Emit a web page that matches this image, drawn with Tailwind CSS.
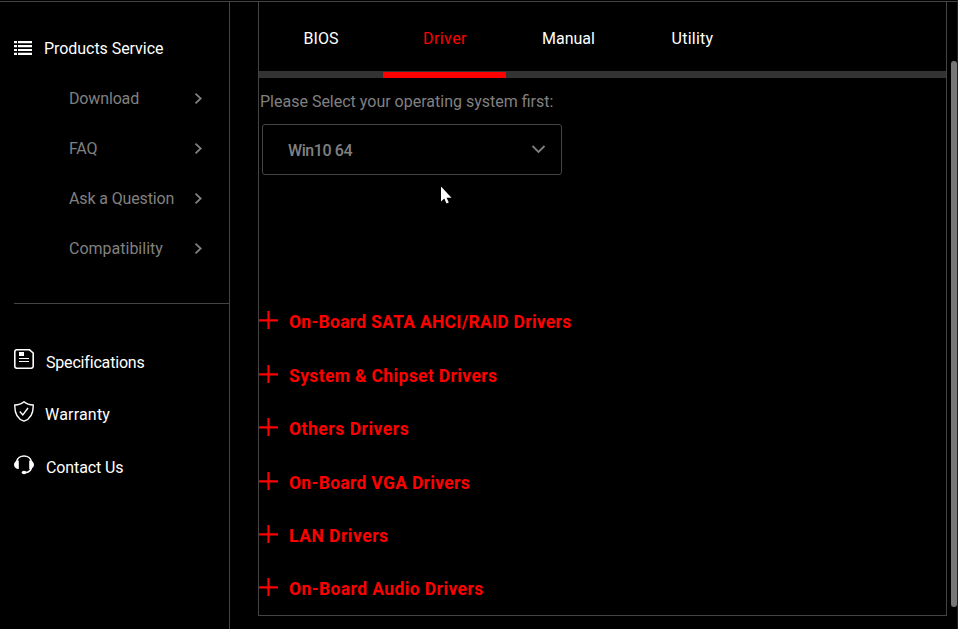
<!DOCTYPE html>
<html lang="en">
<head>
<meta charset="utf-8">
<title>Driver downloads</title>
<script src="https://cdn.jsdelivr.net/npm/@tailwindcss/browser@4"></script>
</head>
<body class="bg-black">
<div class="relative flex h-[629px] w-[958px] overflow-hidden border-r border-[#222] bg-black font-[Roboto,sans-serif] text-[16px] leading-[20px] whitespace-nowrap text-white">
  <aside class="mt-px w-[230px] shrink-0 border-t border-r border-[#444]">
    <nav class="pt-[37px] pl-[14px]">
      <a class="flex h-[20px] items-center gap-[12px]">
        <svg class="-mt-[2px] h-[14px] w-[18px]" viewBox="0 0 18 14" fill="#fff"><path d="M0 0h3v2.200H0zM4 0h14v2.200H4zM0 4h3v2.200H0zM4 4h14v2.200H4zM0 7.900h3v2.200H0zM4 7.900h14v2.200H4zM0 11.800h3V14H0zM4 11.800h14V14H4z"/></svg>
        <span class="tracking-[-0.05px]">Products Service</span>
      </a>
      <div class="mt-[15px] pr-[27px] pl-[55px] text-[#808080]">
        <a class="flex h-[50px] items-center justify-between"><span class="tracking-[-0.15px]">Download</span><svg class="-mt-px h-[11px] w-[8px]" viewBox="0 0 8 11" fill="none" stroke="currentColor" stroke-width="1.8"><path d="M1.500 .7L6.700 5.500 1.500 10.300"/></svg></a>
        <a class="flex h-[50px] items-center justify-between"><span class="tracking-[-0.15px]">FAQ</span><svg class="-mt-px h-[11px] w-[8px]" viewBox="0 0 8 11" fill="none" stroke="currentColor" stroke-width="1.8"><path d="M1.500 .7L6.700 5.500 1.500 10.300"/></svg></a>
        <a class="flex h-[50px] items-center justify-between"><span class="tracking-[-0.13px]">Ask a Question</span><svg class="-mt-px h-[11px] w-[8px]" viewBox="0 0 8 11" fill="none" stroke="currentColor" stroke-width="1.8"><path d="M1.500 .7L6.700 5.500 1.500 10.300"/></svg></a>
        <a class="flex h-[50px] items-center justify-between"><span>Compatibility</span><svg class="-mt-px h-[11px] w-[8px]" viewBox="0 0 8 11" fill="none" stroke="currentColor" stroke-width="1.8"><path d="M1.500 .7L6.700 5.500 1.500 10.300"/></svg></a>
      </div>
      <div class="mt-[29px] border-t border-[#444] pt-[33px]">
        <a class="flex h-[52px] items-center gap-[12px]">
          <svg class="-mt-[8px] h-[20px] w-[20px]" viewBox="0 0 20 20" fill="none" stroke="#fff"><path stroke-width="1.6" d="M3 .8h12.500l3.700 3.200V17a2 2 0 0 1-2 2.200H3A2 2 0 0 1 .8 17V3A2 2 0 0 1 3 .8z"/><path fill="#fff" stroke="none" d="M5 3h5v4H5z"/><path stroke-width="1.2" d="M5 9.500h10M5 12.500h10"/></svg>
          <span class="tracking-[-0.18px]">Specifications</span></a>
        <a class="flex h-[52px] items-center gap-[11px]">
          <svg class="-mt-[7px] h-[21px] w-[20px]" viewBox="0 0 20 21" fill="none" stroke="#fff" stroke-width="1.4"><path d="M10 .8C7.500 3 4 4 .8 4c-.3 8 1.700 13.500 9.200 16.200 7.500-2.700 9.500-8.200 9.200-16.200C16 4 12.500 3 10 .8z"/><path d="M5.800 10.500l3 3.500L14 7"/></svg>
          <span class="tracking-[0.2px]">Warranty</span></a>
        <a class="flex h-[53px] items-center gap-[12px]">
          <svg class="-mt-[6px] h-[21px] w-[20px]" viewBox="0 0 20 21"><path d="M2.500 8a7.600 7.200 0 0 1 15 0v4c0 4-2.500 6.300-6 6.600" fill="none" stroke="#fff" stroke-width="1.600"/><path fill="#fff" d="M4.800 6.500v8.500C2 15 0 13.500 0 10.800S2 6.500 4.800 6.500zM15.200 6.500v8.500c2.800 0 4.800-1.500 4.800-4.200s-2-4.300-4.800-4.300z"/><ellipse cx="10" cy="18.500" rx="2.300" ry="1.700" fill="#fff"/></svg>
          <span class="tracking-[-0.1px]">Contact Us</span></a>
      </div>
    </nav>
  </aside>
  <main class="mt-px h-[628px] flex-1 border-t border-[#444] pl-[28px]">
    <section class="h-[614px] w-[689px] border-r border-b border-l border-[#444]">
      <div class="grid h-[69px] grid-cols-[124px_123px_125px_123px] pt-[27px] text-center">
        <a>BIOS</a><a class="pl-px tracking-[0.4px] text-[#f00]">Driver</a><a>Manual</a><a class="tracking-[0.25px]">Utility</a>
      </div>
      <div class="h-[7px] bg-[#333] pt-px pl-[124px]"><div class="h-[6px] w-[123px] bg-[#f00]"></div></div>
      <p class="mt-[14px] pl-px text-[#808080]">Please Select your operating system first:</p>
      <div class="mt-[12px] ml-[3px] flex h-[51px] w-[300px] items-center justify-between rounded-[3px] border border-[#444] pr-[15px] pl-[25px] font-medium text-[#808080]">
        <span class="pt-[2px] tracking-[-0.4px]">Win10 64</span>
        <svg class="h-[9px] w-[14px]" viewBox="0 0 14 9" fill="none" stroke="currentColor" stroke-width="1.800"><path d="M.5 1l6 6 6-6"/></svg>
      </div>
      <ul class="pt-[137px] text-[17.5px] font-bold text-[#f00]">
        <li class="flex h-[54px] items-start gap-[11px]"><svg class="-mt-px h-[19px] w-[19px]" viewBox="0 0 19 19" stroke="#f00" stroke-width="2.2"><path d="M9.500 0v18M0 9.400h19"/></svg><span class="tracking-[0.27px]">On-Board SATA AHCI/RAID Drivers</span></li>
        <li class="flex h-[53px] items-start gap-[11px]"><svg class="-mt-px h-[19px] w-[19px]" viewBox="0 0 19 19" stroke="#f00" stroke-width="2.2"><path d="M9.500 0v18M0 9.400h19"/></svg><span class="tracking-[0.36px]">System &amp; Chipset Drivers</span></li>
        <li class="flex h-[54px] items-start gap-[11px]"><svg class="-mt-px h-[19px] w-[19px]" viewBox="0 0 19 19" stroke="#f00" stroke-width="2.2"><path d="M9.500 0v18M0 9.400h19"/></svg><span class="tracking-[0.52px]">Others Drivers</span></li>
        <li class="flex h-[53px] items-start gap-[11px]"><svg class="-mt-px h-[19px] w-[19px]" viewBox="0 0 19 19" stroke="#f00" stroke-width="2.2"><path d="M9.500 0v18M0 9.400h19"/></svg><span class="tracking-[0.3px]">On-Board VGA Drivers</span></li>
        <li class="flex h-[53px] items-start gap-[11px]"><svg class="-mt-px h-[19px] w-[19px]" viewBox="0 0 19 19" stroke="#f00" stroke-width="2.2"><path d="M9.500 0v18M0 9.400h19"/></svg><span class="tracking-[0.5px]">LAN Drivers</span></li>
        <li class="flex h-[30px] items-start gap-[11px]"><svg class="-mt-px h-[19px] w-[19px]" viewBox="0 0 19 19" stroke="#f00" stroke-width="2.2"><path d="M9.500 0v18M0 9.400h19"/></svg><span class="tracking-[0.4px]">On-Board Audio Drivers</span></li>
      </ul>
    </section>
  </main>
  <div class="absolute top-[61px] right-0 h-[546px] w-[6px] rounded-[3px] bg-[#777]"></div>
  <svg class="absolute top-[186px] left-[441px] h-[18px] w-[11px]" viewBox="0 0 11 18" fill="#fff"><path d="M0 .5v15l3.300-3 2.200 5 2.300-1-2.200-4.700h4.900z"/></svg>
</div>
</body>
</html>
